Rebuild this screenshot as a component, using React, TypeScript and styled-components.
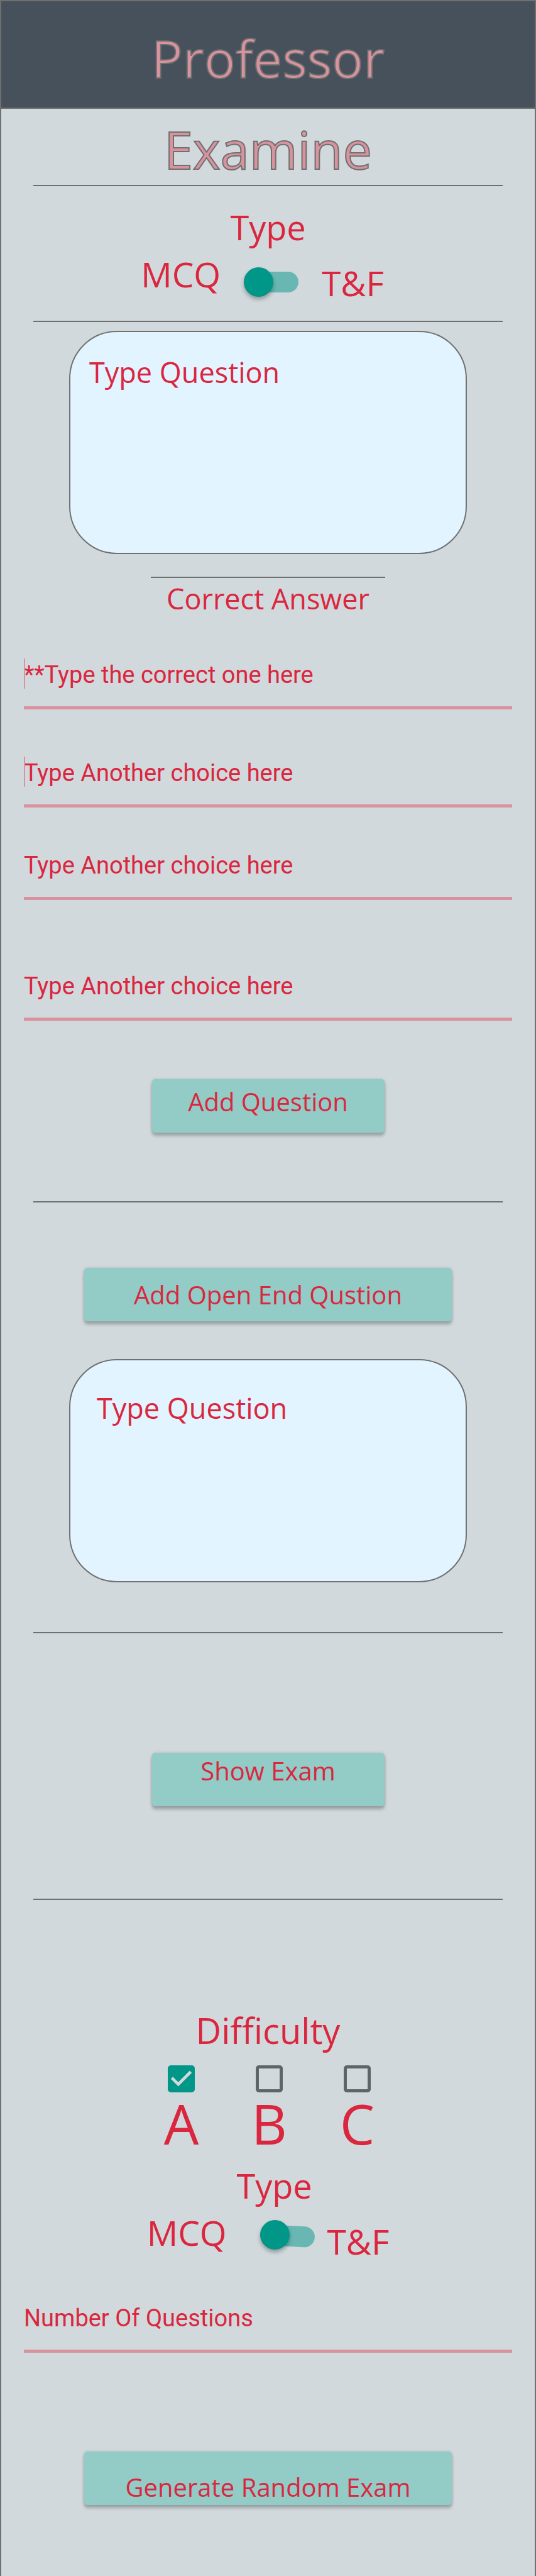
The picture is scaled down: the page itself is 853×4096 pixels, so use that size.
import React, { useState } from "react";
import styled, { createGlobalStyle, css } from "styled-components";

const color = {
  page: "#d1d9dc",
  header: "#47515b",
  line: "#707070",
  red: "#da263e",
  pink: "#d8939e",
  teal: "#009688",
  button: "#93cbc6",
  box: "#e1f4ff",
};

const GlobalStyle = createGlobalStyle`
  *, *::before, *::after { box-sizing: border-box; }
  body {
    margin: 0;
    background: ${color.page};
    color: ${color.red};
    font-family: "Segoe UI", "Open Sans", "Noto Sans", sans-serif;
  }
`;

const Page = styled.div`
  display: flex;
  flex-direction: column;
  min-height: 100vh;
  border: solid ${color.line};
  border-width: 0 2px;
`;

const Header = styled.header`
  padding: 40px 0 29px;
  background: ${color.header};
  border: solid ${color.line};
  border-width: 2px 0;
`;

const title = css`
  margin: 0;
  font-size: 83px;
  line-height: 100px;
  font-weight: 400;
  text-align: center;
  color: ${color.pink};
  -webkit-text-stroke: 2px ${color.line};
`;

const AppTitle = styled.h1`
  ${title}
`;

const PageTitle = styled.h2`
  ${title}
  padding: 14px 0 7px;
`;

const Section = styled.section<{ $top: number; $bottom: number }>`
  display: flex;
  flex-direction: column;
  padding: ${(p) => p.$top}px 0 ${(p) => p.$bottom}px;
`;

const Rule = styled.hr<{ $short?: boolean }>`
  width: ${(p) => (p.$short ? "44%" : "88%")};
  height: 2px;
  margin: 0 auto;
  border: 0;
  background: ${color.line};
`;

const GroupTitle = styled.h3<{ $indent?: number }>`
  margin: 0;
  padding-left: ${(p) => p.$indent ?? 0}px;
  font-size: 54px;
  line-height: 75px;
  font-weight: 400;
  text-align: center;
`;

const AnswerTitle = styled.h3`
  margin: 3px 0 65px;
  font-size: 45px;
  line-height: 60px;
  font-weight: 400;
  text-align: center;
`;

const SwitchRow = styled.div<{ $shift?: number }>`
  display: flex;
  justify-content: center;
  height: 88px;
  padding-right: ${(p) => p.$shift ?? 0}px;
`;

const SwitchLabel = styled.label<{ $low?: boolean }>`
  align-self: ${(p) => (p.$low ? "flex-end" : "flex-start")};
  font-size: 55px;
  line-height: 74px;
`;

const Switch = styled.input<{ $tilt?: boolean }>`
  appearance: none;
  display: grid;
  align-items: center;
  width: 87px;
  height: 48px;
  margin: ${(p) => (p.$tilt ? "16px 20px 0 53px" : "25px 37px 0")};
  cursor: pointer;

  &::before,
  &::after {
    content: "";
    grid-area: 1 / 1;
  }
  &::before {
    height: 33px;
    margin-left: 7px;
    border-radius: 17px;
    background: ${color.teal};
    opacity: 0.5;
    transform: rotate(${(p) => (p.$tilt ? 3 : 0)}deg);
    transform-origin: left;
  }
  &::after {
    width: 47px;
    height: 47px;
    border-radius: 50%;
    background: ${color.teal};
    box-shadow: 0 4px 6px rgba(0, 0, 0, 0.3);
    z-index: 1;
  }
  &:checked::after {
    justify-self: end;
  }
`;

const QuestionBox = styled.textarea<{ $top: number; $left: number }>`
  display: block;
  height: 355px;
  margin: 0 108px;
  padding: ${(p) => p.$top}px ${(p) => p.$left}px;
  border: 2px solid ${color.line};
  border-radius: 76px;
  background: ${color.box};
  color: ${color.red};
  font: 45px/60px "Segoe UI", "Open Sans", "Noto Sans", sans-serif;
  resize: none;
  outline: 0;
  &::placeholder {
    color: ${color.red};
    opacity: 1;
  }
`;

const Field = styled.div<{ $top?: number; $caret?: boolean }>`
  position: relative;
  margin: ${(p) => p.$top ?? 0}px 36px 0;
  padding-bottom: 25px;
  border-bottom: 5px solid ${color.pink};
  ${(p) =>
    p.$caret &&
    css`
      &::after {
        content: "";
        position: absolute;
        top: 0;
        left: 0;
        width: 2px;
        height: 48px;
        background: ${color.pink};
      }
    `}
`;

const FieldInput = styled.input`
  display: block;
  width: 100%;
  height: 51px;
  padding: 1px 0 0;
  border: 0;
  background: none;
  color: ${color.red};
  font: 38px/50px Roboto, sans-serif;
  outline: 0;
  &::placeholder {
    color: ${color.red};
    opacity: 1;
  }
`;

const Button = styled.button<{ $wide?: boolean; $drop: number }>`
  display: flex;
  justify-content: center;
  align-items: flex-start;
  align-self: center;
  width: ${(p) => (p.$wide ? 585 : 370)}px;
  height: 85px;
  padding: ${(p) => p.$drop}px 0 0;
  border: 0;
  border-radius: 5px;
  background: ${color.button};
  box-shadow: 0 5px 5px rgba(0, 0, 0, 0.24), 0 0 5px rgba(0, 0, 0, 0.12);
  color: ${color.red};
  font: 40px/50px "Segoe UI", "Open Sans", "Noto Sans", sans-serif;
  white-space: nowrap;
  cursor: pointer;
`;

const DifficultyTitle = styled(GroupTitle)`
  font-size: 56px;
  line-height: 78px;
`;

const Levels = styled.div`
  display: flex;
  justify-content: center;
  padding: 17px 0 13px 4px;
`;

const Level = styled.label`
  display: flex;
  flex-direction: column;
  align-items: center;
  width: 140px;
  font-size: 88px;
  line-height: 98px;
`;

const Tick = styled.span`
  position: relative;
  width: 43px;
  height: 43px;
`;

const TickInput = styled.input`
  appearance: none;
  display: block;
  width: 100%;
  height: 100%;
  margin: 0;
  border: 5px solid #5f6566;
  border-radius: 5px;
  cursor: pointer;
  &:checked {
    border-color: ${color.teal};
    background: ${color.teal};
  }
`;

const TickMark = styled.svg`
  position: absolute;
  inset: 0;
  pointer-events: none;
`;

function TypeSwitch({ id, tilt }: { id: string; tilt?: boolean }) {
  const [trueFalse, setTrueFalse] = useState(false);
  return (
    <SwitchRow $shift={tilt ? 0 : 18}>
      <SwitchLabel htmlFor={id}>MCQ</SwitchLabel>
      <Switch
        id={id}
        type="checkbox"
        role="switch"
        $tilt={tilt}
        checked={trueFalse}
        onChange={(e) => setTrueFalse(e.target.checked)}
      />
      <SwitchLabel htmlFor={id} $low>
        T&amp;F
      </SwitchLabel>
    </SwitchRow>
  );
}

function LevelOption({ name, initial }: { name: string; initial?: boolean }) {
  const [on, setOn] = useState(!!initial);
  return (
    <Level>
      <Tick>
        <TickInput type="checkbox" checked={on} onChange={(e) => setOn(e.target.checked)} />
        {on && (
          <TickMark viewBox="0 0 18 18" aria-hidden="true">
            <path d="M7 14 2 9l1.41-1.41L7 11.17l7.59-7.59L16 5z" fill={color.page} />
          </TickMark>
        )}
      </Tick>
      {name}
    </Level>
  );
}

const choices = [
  { text: "**Type the correct one here", top: 0, caret: true },
  { text: "Type Another choice here", top: 75, caret: true },
  { text: "Type Another choice here", top: 66, caret: false },
  { text: "Type Another choice here", top: 111, caret: false },
];

export default function App() {
  return (
    <>
      <GlobalStyle />
      <Page>
        <Header>
          <AppTitle>Professor</AppTitle>
        </Header>
        <main>
          <PageTitle>Examine</PageTitle>
          <Rule />
          <Section $top={28} $bottom={23}>
            <GroupTitle>Type</GroupTitle>
            <TypeSwitch id="question-type" />
          </Section>
          <Rule />
          <Section $top={14} $bottom={109}>
            <QuestionBox $top={34} $left={30} aria-label="Question" placeholder="Type Question" />
            <Section $top={36} $bottom={93}>
              <Rule $short />
              <AnswerTitle>Correct Answer</AnswerTitle>
              {choices.map((c, i) => (
                <Field key={i} $top={c.top} $caret={c.caret}>
                  <FieldInput aria-label={`Choice ${i + 1}`} placeholder={c.text} />
                </Field>
              ))}
            </Section>
            <Button type="button" $drop={11}>
              Add Question
            </Button>
          </Section>
          <Rule />
          <Section $top={104} $bottom={79}>
            <Button type="button" $wide $drop={18}>
              Add Open End Qustion
            </Button>
            <Section $top={60} $bottom={0}>
              <QuestionBox
                $top={46}
                $left={42}
                aria-label="Open end question"
                placeholder="Type Question"
              />
            </Section>
          </Section>
          <Rule />
          <Section $top={190} $bottom={147}>
            <Button type="button" $drop={4}>
              Show Exam
            </Button>
          </Section>
          <Rule />
          <Section $top={168} $bottom={113}>
            <DifficultyTitle>Difficulty</DifficultyTitle>
            <Levels>
              <LevelOption name="A" initial />
              <LevelOption name="B" />
              <LevelOption name="C" />
            </Levels>
            <GroupTitle $indent={20}>Type</GroupTitle>
            <TypeSwitch id="exam-type" tilt />
            <Section $top={59} $bottom={157}>
              <Field>
                <FieldInput aria-label="Number of questions" placeholder="Number Of Questions" />
              </Field>
            </Section>
            <Button type="button" $wide $drop={32}>
              Generate Random Exam
            </Button>
          </Section>
        </main>
      </Page>
    </>
  );
}
